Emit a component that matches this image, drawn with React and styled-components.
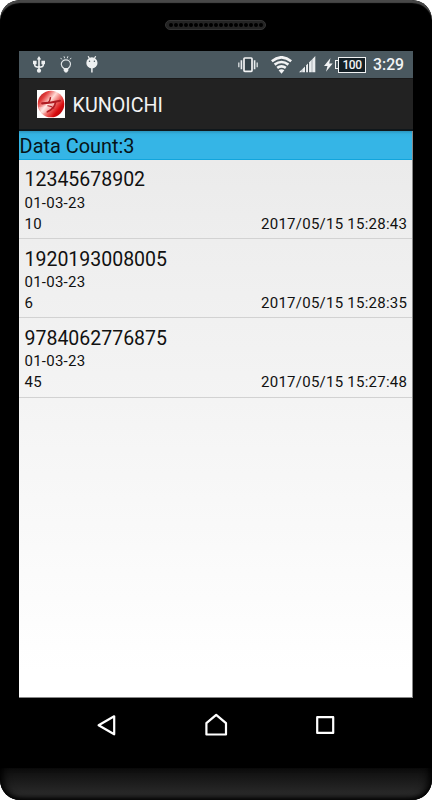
import React from "react";
import styled, { createGlobalStyle } from "styled-components";

const records = [
  { code: "12345678902", location: "01-03-23", quantity: 10, date: "2017/05/15 15:28:43" },
  { code: "1920193008005", location: "01-03-23", quantity: 6, date: "2017/05/15 15:28:35" },
  { code: "9784062776875", location: "01-03-23", quantity: 45, date: "2017/05/15 15:27:48" },
];

function UsbIcon() {
  return (
    <Icon width="12" height="17" viewBox="0 0 12 17">
      <path d="M6 2V15M1.8 6v3.3Q1.8 11 6 11.2Q10.2 11 10.2 9.3V6" fill="none" stroke="#eef0f1" strokeWidth="1.6" />
      <path d="M6 0L8.2 3.4H3.8zM0 4.8h3.6v3.5H0zM8.4 4.8H12v3.5H8.4z" fill="#eef0f1" />
      <circle cx="6" cy="14.7" r="2.1" fill="#eef0f1" />
    </Icon>
  );
}

function BulbIcon() {
  return (
    <Icon width="12" height="17" viewBox="0 0 12 17">
      <path d="M4 12.5Q1.3 10.5 1.3 8.3a4.6 4.4 0 0 1 9.2 0Q10.5 10.5 8 12.5z" fill="none" stroke="#dfe4e6" strokeWidth="1.2" />
      <path d="M4 0.3l.7 2M7.9.3l-.7 2M.6 1.9l1.2 1.5M11.2 1.9L10 3.4" stroke="#dfe4e6" strokeWidth="1" />
      <path d="M3.7 12.3h4.6v2.1L7 16.4H5l-1.3-2z" fill="#eef0f1" />
    </Icon>
  );
}

function LollipopIcon() {
  return (
    <Icon width="12" height="17" viewBox="0 0 12 17">
      <path d="M2.1.2l1.5 2.6M9.7.2L8.2 2.8" stroke="#eef0f1" strokeWidth="1.2" />
      <circle cx="5.9" cy="6.9" r="5.6" fill="#eef0f1" />
      <path d="M5.9 11v5.6" stroke="#eef0f1" strokeWidth="1.5" />
      <circle cx="3.5" cy="5.3" r=".75" fill="#4a575e" />
      <circle cx="8.4" cy="5.3" r=".75" fill="#4a575e" />
    </Icon>
  );
}

function VibrateIcon() {
  return (
    <Icon width="20" height="16" viewBox="0 0 20 16">
      <rect x="6" y="1" width="8" height="13.4" rx=".8" fill="#35434a" stroke="#f2f3f4" strokeWidth="1.7" />
      <path d="M3.4 3.3v9M16.6 3.3v9" stroke="#e9ecee" strokeWidth="1.6" />
      <path d="M.8 5.4v4.8M19.2 5.4v4.8" stroke="#d5dadc" strokeWidth="1.4" />
    </Icon>
  );
}

function WifiIcon() {
  return (
    <Icon width="21" height="18" viewBox="0 0 21 18">
      <g fill="none" stroke="#f2f3f4" strokeWidth="2.6">
        <path d="M.8 5.2q9.7-7.8 19.4 0" />
        <path d="M3.6 8.6q6.9-5.2 13.8 0" />
        <path d="M6.2 11.9q4.3-3.2 8.6 0" />
      </g>
      <path d="M10.5 17.8L7.6 14.2q2.9-2 5.8 0z" fill="#f2f3f4" />
    </Icon>
  );
}

function SignalIcon() {
  return (
    <Icon width="17" height="17" viewBox="0 0 17 17">
      <path d="M0 16.3L2.8 13.6v2.7zM3.2 16.3v-3.1L6.2 10.2v6.1zM7 16.3V9.4L9.2 7.2v9.1zM10 16.3V6.4l2.8-2.8v12.7zM13.2 16.3V3.2L16.3.1v16.2z" fill="#e9ecee" />
      <path d="M6.6 10v6.3M9.6 7v9.3" stroke="#1d2b31" strokeWidth=".65" />
    </Icon>
  );
}

function BoltIcon() {
  return (
    <Icon width="9" height="14" viewBox="0 0 9 14">
      <path d="M6.5 0L0 8h3.5L2 13.7 8.7 5.5H5.2z" fill="#f2f3f4" />
    </Icon>
  );
}

function AppLogo() {
  return (
    <Icon width="28" height="28" viewBox="0 0 28 28">
      <defs>
        <linearGradient id="ball" x1="0" y1=".1" x2="1" y2=".9">
          <stop offset="0" stopColor="#a3181c" />
          <stop offset=".2" stopColor="#e33c3b" />
          <stop offset=".42" stopColor="#ffdcd7" />
          <stop offset=".6" stopColor="#ee6460" />
          <stop offset=".78" stopColor="#d8090d" />
          <stop offset="1" stopColor="#9b0508" />
        </linearGradient>
      </defs>
      <rect width="28" height="28" fill="#fff" />
      <circle cx="14" cy="14" r="13.3" fill="url(#ball)" />
      <path d="M1.5 17q6 1 11.5-5l5 1.5q-4 8-12.5 10z" fill="#fff" opacity=".35" />
      <g fill="none" stroke="#b01c22" strokeLinecap="round" strokeLinejoin="round">
        <path d="M5.2 13.4Q14 13 23 10.8" strokeWidth="2.2" />
        <path d="M13.4 7.8q-.2 2.6-1.8 4.6" strokeWidth="1.5" />
        <path d="M10.8 15.8q3.6.4 6 2.4" strokeWidth="1.1" />
        <path d="M18.6 12.2q-1 6.8-8.3 9.6" strokeWidth="1.6" />
      </g>
    </Icon>
  );
}

export default function App() {
  return (
    <>
      <GlobalStyle />
      <Phone>
        <TopBezel>
          <Speaker>
            {[...Array(19)].map((_, i) => (
              <Hole key={i} />
            ))}
          </Speaker>
        </TopBezel>
        <Screen>
          <StatusBar>
            <Notifications>
              <UsbIcon />
              <BulbIcon />
              <LollipopIcon />
            </Notifications>
            <SystemIcons>
              <VibrateIcon />
              <WifiIcon />
              <SignalIcon />
              <Power>
                <BoltIcon />
                <Battery>
                  <BatteryTip />
                  <BatteryLevel>100</BatteryLevel>
                </Battery>
              </Power>
              <Clock>3:29</Clock>
            </SystemIcons>
          </StatusBar>
          <ActionBar>
            <AppLogo />
            <AppTitle>KUNOICHI</AppTitle>
          </ActionBar>
          <CountBar>Data Count:{records.length}</CountBar>
          <RecordList>
            {records.map((record) => (
              <Record key={record.code}>
                <Code>{record.code}</Code>
                <Detail>{record.location}</Detail>
                <Detail>
                  <span>{record.quantity}</span>
                  <span>{record.date}</span>
                </Detail>
              </Record>
            ))}
          </RecordList>
        </Screen>
        <NavBar>
          <Icon width="22" height="24" viewBox="0 0 22 24">
            <path d="M2.6 12.3L18.2 3.3v18z" />
          </Icon>
          <Icon width="24" height="24" viewBox="0 0 24 24">
            <path d="M1.4 10.2L11.2 1.8l9.8 8.4v11.3H1.4z" />
          </Icon>
          <Icon width="20" height="24" viewBox="0 0 20 24">
            <rect x="2.2" y="4.2" width="16" height="15.7" />
          </Icon>
        </NavBar>
        <Chin />
      </Phone>
    </>
  );
}

const GlobalStyle = createGlobalStyle`
  * {
    box-sizing: border-box;
  }
  body {
    margin: 0;
    background: #fff;
    font-family: Roboto, sans-serif;
  }
`;

const Phone = styled.main`
  width: 432px;
  height: 800px;
  display: flex;
  flex-direction: column;
  overflow: hidden;
  border-radius: 20px;
  background: #000;
`;

const TopBezel = styled.div`
  height: 51px;
  flex: none;
  padding: 20px 1px 0 0;
  display: flex;
  justify-content: center;
  align-items: flex-start;
  border-radius: 20px 20px 0 0;
  box-shadow: inset 0 4px 1px -1px #484848;
`;

const Speaker = styled.div`
  width: 101px;
  height: 10px;
  display: flex;
  align-items: center;
  justify-content: center;
  gap: 1px;
  border: 1px solid #343434;
  border-radius: 5px;
  background: #242424;
`;

const Hole = styled.span`
  width: 4px;
  height: 4px;
  border-radius: 2px;
  background: #000;
`;

const Screen = styled.div`
  width: 394px;
  height: 647px;
  flex: none;
  margin-left: 19px;
  display: flex;
  flex-direction: column;
  border: solid #888;
  border-width: 0 1px 1px 0;
  background: linear-gradient(#ebebeb 110px, #f4f4f4 350px, #fff 620px);
`;

const Icon = styled.svg`
  display: block;
  flex: none;
`;

const StatusBar = styled.div`
  height: 27px;
  flex: none;
  padding: 0 9px 0 14px;
  display: flex;
  align-items: center;
  justify-content: space-between;
  margin-right: -1px;
  background: #4a585f;
  color: #f2f3f4;
`;

const Notifications = styled.div`
  display: flex;
  gap: 14.5px;
`;

const SystemIcons = styled.div`
  display: flex;
  align-items: center;

  & > svg:nth-child(2) {
    margin-left: 13px;
  }
  & > svg:nth-child(3) {
    margin-left: 7px;
  }
`;

const Power = styled.div`
  display: flex;
  align-items: center;
  gap: 2px;
  margin-left: 8px;
`;

const Battery = styled.div`
  display: flex;
  align-items: center;
`;

const BatteryTip = styled.span`
  width: 3px;
  height: 9px;
  border: 1px solid #f2f3f4;
  border-right: 0;
`;

const BatteryLevel = styled.span`
  width: 28px;
  height: 16px;
  border: 1px solid #f2f3f4;
  background: #141f25;
  font-size: 12px;
  font-weight: 500;
  line-height: 14px;
  text-align: center;
  letter-spacing: -0.5px;
`;

const Clock = styled.span`
  width: 31px;
  margin-left: 7px;
  font-size: 15.8px;
  font-weight: 500;
  line-height: 20px;
  white-space: nowrap;
  padding-top: 1px;
`;

const ActionBar = styled.header`
  height: 53px;
  flex: none;
  margin-right: -1px;
  padding: 0 0 0 18px;
  display: flex;
  align-items: center;
  gap: 7.6px;
  border-top: 1px solid #1b1a1a;
  border-bottom: 2px solid #10171b;
  background: #222;
`;

const AppTitle = styled.h1`
  margin: 3px 0 0;
  color: #f3f3f3;
  font-size: 19.7px;
  font-weight: 400;
  line-height: 24px;
`;

const CountBar = styled.div`
  height: 29px;
  flex: none;
  padding: 2px 0 0 0.6px;
  border-bottom: 1px solid #12a5dc;
  background: linear-gradient(#2c96bf, #33b1e1 3px, #35b5e6 7px);
  color: #071317;
  font-size: 19.9px;
  line-height: 28px;
`;

const RecordList = styled.ul`
  margin: 0;
  padding: 0;
  list-style: none;
`;

const Record = styled.li`
  height: 79.2px;
  padding: 7.4px 4.8px 0 5.5px;
  border-bottom: 1px solid #d2d2d2;
  color: #111;
`;

const Code = styled.div`
  font-size: 19.5px;
  line-height: 25.3px;
`;

const Detail = styled.div`
  display: flex;
  justify-content: space-between;
  font-size: 15px;
  line-height: 20.9px;
  letter-spacing: 0.25px;
`;

const NavBar = styled.nav`
  height: 70px;
  flex: none;
  padding: 15px 97px 0 96px;
  display: flex;
  justify-content: space-between;
  align-items: flex-start;
  fill: none;
  stroke: #fff;
  stroke-width: 2.2;
  stroke-linejoin: round;
`;

const Chin = styled.div`
  flex: 1;
  border-radius: 0 0 20px 20px;
  background: linear-gradient(#0d0d0d, #292929 26px);
  box-shadow: inset 0 -4px 5px -2px #000, inset 8px 0 8px -5px #000, inset -8px 0 8px -5px #000;
`;
